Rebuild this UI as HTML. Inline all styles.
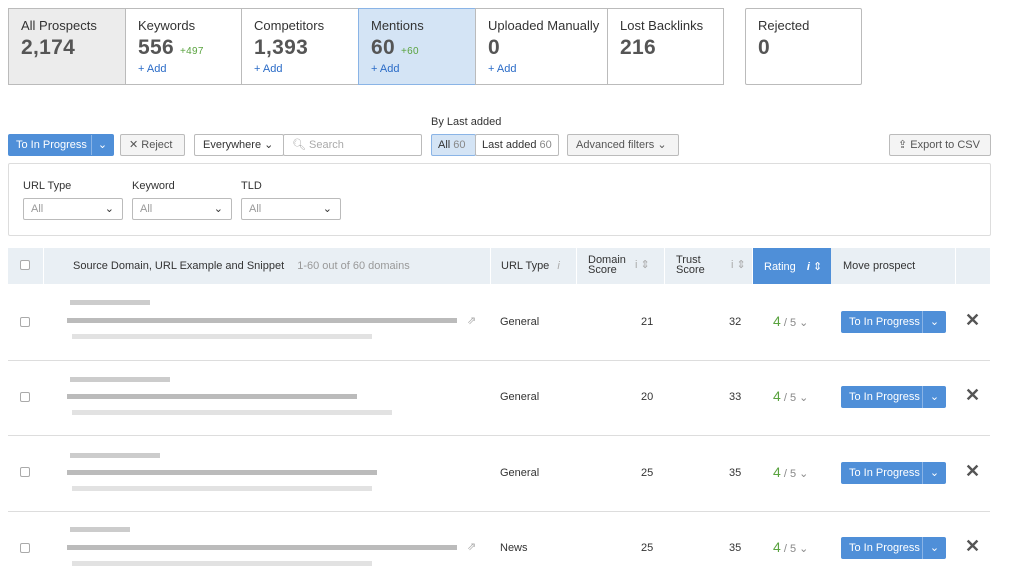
<!DOCTYPE html><html><head><style>
*{box-sizing:border-box;margin:0;padding:0}
body{width:1010px;height:583px;overflow:hidden;background:#fff;font-family:"Liberation Sans",sans-serif;color:#333;position:relative;font-size:11px}
.a{position:absolute;white-space:nowrap}
.card{position:absolute;top:8px;height:77px;border:1px solid #bbb;background:#fff;padding:9px 12px;white-space:nowrap}
.card .t{font-size:13px;color:#333}
.card .n{font-size:21px;color:#555;margin-top:3px;font-weight:bold;letter-spacing:.3px}
.card .n small{font-size:10px;color:#5aa33f;font-weight:normal;margin-left:6px}
.card .ad{color:#2a6bc7;font-size:11px;margin-top:3px}
.btn{position:absolute;top:134px;height:22px;border:1px solid #bbb;border-radius:2px;background:#f4f4f4;font-size:11px;line-height:20px;color:#555;padding:0 8px;white-space:nowrap;overflow:hidden}
.blue{background:#4f8fd8;color:#fff;border-color:#4f8fd8}
.sel{position:absolute;top:198px;height:22px;border:1px solid #bbb;border-radius:2px;color:#999;padding-left:7px;line-height:20px;font-size:11px}
.hd{position:absolute;top:248px;height:36px;background:#e9eff4;font-size:11px;color:#333;white-space:nowrap}
.row{position:absolute;left:8px;width:982px;border-bottom:1px solid #ddd}
.cb{position:absolute;width:10px;height:10px;border:1px solid #aaa;border-radius:2px;background:#fff}
.bar{position:absolute;background:#ccc;height:5px}
.v{position:absolute;font-size:11px;color:#333;white-space:nowrap}
.mv{position:absolute;left:841px;width:105px;height:22px;background:#4f8fd8;border-radius:2px;color:#fff;font-size:11px;line-height:22px;padding-left:8px;white-space:nowrap}
.mv i{position:absolute;right:0;top:0;width:24px;height:22px;border-left:1px solid #8ab4e6;font-style:normal;text-align:center}
.x{position:absolute;left:965px;font-size:18px;color:#555;font-weight:bold}
</style></head><body>
<div class="card" style="left:8px;width:118px;background:#ececec"><div class="t">All Prospects</div><div class="n">2,174</div></div>
<div class="card" style="left:125px;width:117px"><div class="t">Keywords</div><div class="n">556<small>+497</small></div><div class="ad">+ Add</div></div>
<div class="card" style="left:241px;width:118px"><div class="t">Competitors</div><div class="n">1,393</div><div class="ad">+ Add</div></div>
<div class="card" style="left:358px;width:118px;background:#d4e4f5;border-color:#8ab4e6"><div class="t">Mentions</div><div class="n">60<small>+60</small></div><div class="ad">+ Add</div></div>
<div class="card" style="left:475px;width:133px"><div class="t">Uploaded Manually</div><div class="n">0</div><div class="ad">+ Add</div></div>
<div class="card" style="left:607px;width:117px"><div class="t">Lost Backlinks</div><div class="n">216</div></div>
<div class="card" style="left:745px;width:117px;border-radius:2px"><div class="t">Rejected</div><div class="n">0</div></div>

<div class="a" style="left:431px;top:116px;font-size:11px">By Last added</div>
<div class="btn blue" style="left:8px;width:106px;padding:0">
<span style="padding-left:7px">To In Progress</span><span style="position:absolute;left:82px;top:0;width:22px;border-left:1px solid #8ab4e6;text-align:center">⌄</span></div>
<div class="btn" style="left:120px;width:65px">✕ Reject</div>
<div class="btn" style="left:194px;width:90px;background:#fff;color:#333">Everywhere ⌄</div>
<div class="btn" style="left:283px;width:139px;background:#fff;color:#aaa">🔍︎ Search</div>
<div class="btn" style="left:431px;width:45px;background:#d4e4f5;border-color:#8ab4e6;color:#333;padding:0 6px">All <span style="color:#888">60</span></div>
<div class="btn" style="left:475px;width:84px;background:#fff;color:#333;padding:0 6px">Last added <span style="color:#888">60</span></div>
<div class="btn" style="left:567px;width:112px">Advanced filters ⌄</div>
<div class="btn" style="left:889px;width:102px">⇪ Export to CSV</div>

<div class="a" style="left:8px;top:163px;width:983px;height:73px;border:1px solid #ddd;border-radius:2px"></div>
<div class="a" style="left:23px;top:180px">URL Type</div>
<div class="a" style="left:132px;top:180px">Keyword</div>
<div class="a" style="left:241px;top:180px">TLD</div>
<div class="sel" style="left:23px;width:100px">All<span style="position:absolute;right:8px;color:#333">⌄</span></div>
<div class="sel" style="left:132px;width:100px">All<span style="position:absolute;right:8px;color:#333">⌄</span></div>
<div class="sel" style="left:241px;width:100px">All<span style="position:absolute;right:8px;color:#333">⌄</span></div>

<div class="hd" style="left:8px;width:35px"><div class="cb" style="left:12px;top:12px"></div></div>
<div class="hd" style="left:44px;width:446px;padding:12px 0 0 29px">Source Domain, URL Example and Snippet <span style="color:#999;margin-left:10px">1-60 out of 60 domains</span></div>
<div class="hd" style="left:491px;width:85px;padding:12px 0 0 10px">URL Type <span style="color:#aaa;font-style:italic;margin-left:5px">i</span></div>
<div class="hd" style="left:577px;width:87px;padding:7px 0 0 11px;line-height:10px">Domain<br>Score<span class="a" style="left:58px;top:12px;color:#aaa">i ⇕</span></div>
<div class="hd" style="left:665px;width:87px;padding:7px 0 0 11px;line-height:10px">Trust<br>Score<span class="a" style="left:66px;top:12px;color:#aaa">i ⇕</span></div>
<div class="hd" style="left:753px;width:78px;padding:12px 0 0 11px;background:#4f8fd8;color:#fff">Rating <b style="margin-left:8px;font-style:italic">i</b> ⇕</div>
<div class="hd" style="left:831px;width:124px;padding:12px 0 0 12px">Move prospect</div>
<div class="hd" style="left:956px;width:34px"></div>

<div class="row" style="top:284px;height:77px"></div>
<div class="row" style="top:361px;height:75px"></div>
<div class="row" style="top:436px;height:76px"></div>

<div class="cb" style="left:20px;top:317px"></div><div class="bar" style="left:70px;top:300px;width:80px"></div><div class="bar" style="left:67px;top:318px;width:390px;background:#bbb"></div><div class="bar" style="left:72px;top:334px;width:300px;background:#e2e2e2"></div><div class="v" style="left:467px;top:314px;color:#aaa">⇗</div>
<div class="v" style="left:500px;top:316px">General</div><div class="v" style="left:641px;top:316px">21</div><div class="v" style="left:729px;top:316px">32</div>
<div class="v" style="left:773px;top:313px;font-size:14px;color:#5aa33f">4<span style="font-size:11px;color:#888"> / 5 ⌄</span></div><div class="mv" style="top:311px">To In Progress<i>⌄</i></div><div class="x" style="top:310px">✕</div>

<div class="cb" style="left:20px;top:392px"></div><div class="bar" style="left:70px;top:377px;width:100px"></div><div class="bar" style="left:67px;top:394px;width:290px;background:#bbb"></div><div class="bar" style="left:72px;top:410px;width:320px;background:#e2e2e2"></div>
<div class="v" style="left:500px;top:391px">General</div><div class="v" style="left:641px;top:391px">20</div><div class="v" style="left:729px;top:391px">33</div>
<div class="v" style="left:773px;top:388px;font-size:14px;color:#5aa33f">4<span style="font-size:11px;color:#888"> / 5 ⌄</span></div><div class="mv" style="top:386px">To In Progress<i>⌄</i></div><div class="x" style="top:385px">✕</div>

<div class="cb" style="left:20px;top:467px"></div><div class="bar" style="left:70px;top:453px;width:90px"></div><div class="bar" style="left:67px;top:470px;width:310px;background:#bbb"></div><div class="bar" style="left:72px;top:486px;width:300px;background:#e2e2e2"></div>
<div class="v" style="left:500px;top:467px">General</div><div class="v" style="left:641px;top:467px">25</div><div class="v" style="left:729px;top:467px">35</div>
<div class="v" style="left:773px;top:464px;font-size:14px;color:#5aa33f">4<span style="font-size:11px;color:#888"> / 5 ⌄</span></div><div class="mv" style="top:462px">To In Progress<i>⌄</i></div><div class="x" style="top:461px">✕</div>

<div class="cb" style="left:20px;top:543px"></div><div class="bar" style="left:70px;top:527px;width:60px"></div><div class="bar" style="left:67px;top:545px;width:390px;background:#bbb"></div><div class="bar" style="left:72px;top:561px;width:300px;background:#e2e2e2"></div><div class="v" style="left:467px;top:540px;color:#aaa">⇗</div>
<div class="v" style="left:500px;top:542px">News</div><div class="v" style="left:641px;top:542px">25</div><div class="v" style="left:729px;top:542px">35</div>
<div class="v" style="left:773px;top:539px;font-size:14px;color:#5aa33f">4<span style="font-size:11px;color:#888"> / 5 ⌄</span></div><div class="mv" style="top:537px">To In Progress<i>⌄</i></div><div class="x" style="top:536px">✕</div>
</body></html>
